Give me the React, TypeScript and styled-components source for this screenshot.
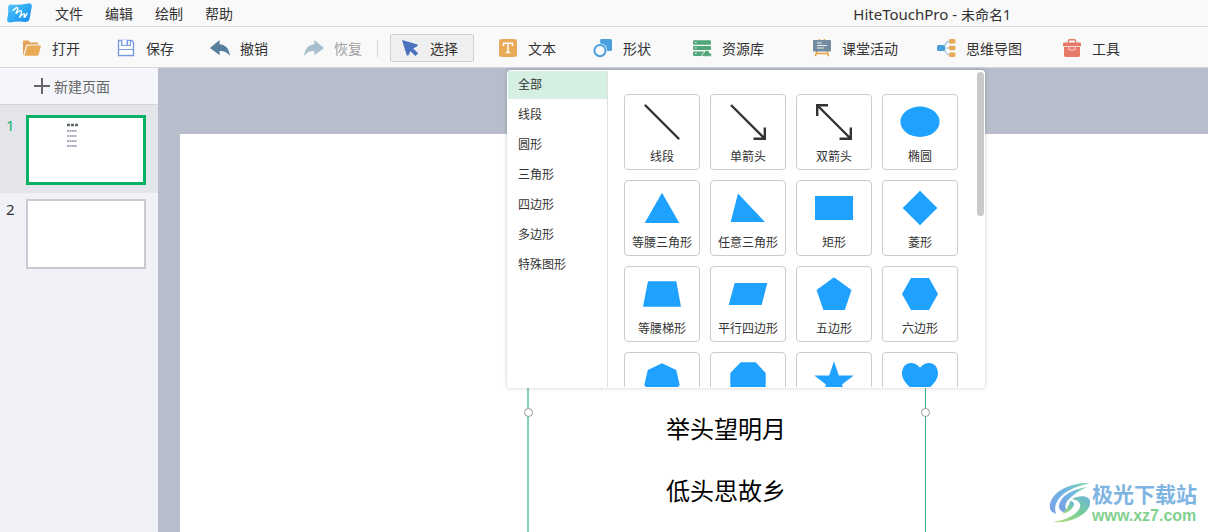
import React from "react";
import styled, { createGlobalStyle, css } from "styled-components";

const GlobalStyle = createGlobalStyle`
  *, *::before, *::after { box-sizing: border-box; }
  body { margin: 0; }
  body, button {
    font-family: "Noto Sans", "Noto Sans CJK SC", sans-serif;
    font-size: 14px;
    color: #333;
  }
  button { margin: 0; padding: 0; border: 0; background: none; cursor: pointer; }
  svg { display: block; flex: none; }
`;

const Shell = styled.div`
  position: relative;
  display: flex;
  flex-direction: column;
  min-height: 100vh;
  overflow: hidden;
`;

const TitleBar = styled.header`
  display: flex;
  align-items: center;
  height: 27px;
  padding-left: 7px;
  background: #f9f9f9;
  border-bottom: 1px solid #d9d9dc;
`;

const Menu = styled.nav`
  display: flex;
  gap: 22px;
  margin-left: 22px;
`;

const MenuButton = styled.button`
  padding-top: 2px;
  line-height: 24px;
`;

const WindowTitle = styled.h1`
  margin: 0 197px 0 auto;
  padding-top: 2px;
  font-size: 14px;
  font-weight: 400;
  line-height: 24px;
  white-space: nowrap;
`;

const AppName = styled.span`
  font-size: 15px;
`;

const Toolbar = styled.div`
  display: flex;
  align-items: center;
  height: 41px;
  padding: 2px 0 0 12px;
  background: #f9f9f9;
  border-bottom: 1px solid #d4d5da;
`;

const ToolGroup = styled.div`
  display: flex;
  gap: 10px;
`;

const ToolButton = styled.button<{ $active?: boolean; $lead?: number }>`
  display: flex;
  align-items: center;
  gap: 10px;
  height: 28px;
  margin-left: ${(p) => p.$lead ?? 0}px;
  padding: 0 15px 0 9px;
  border: 1px solid transparent;
  border-radius: 2px;
  line-height: 20px;
  white-space: nowrap;
  ${(p) =>
    p.$active &&
    css`
      background: #efefef;
      border-color: #d2d2d2;
    `}
  &:disabled { color: #a2a2a2; cursor: default; }
`;

const ToolLabel = styled.span`
  padding-top: 2px;
`;

const ToolDivider = styled.span`
  width: 1px;
  height: 17px;
  margin: 0 12px 0 -1px;
  background: #d6d6d6;
`;

const Body = styled.div`
  display: flex;
  flex: 1;
`;

const Sidebar = styled.aside`
  flex: none;
  width: 158px;
  background: #f1f2f8;
`;

const NewPage = styled.button`
  display: flex;
  align-items: center;
  gap: 4px;
  width: 100%;
  height: 37px;
  padding-left: 34px;
  background: #f5f6fc;
  border-bottom: 1px solid #d3d4db;
  color: #666;
`;

const PageList = styled.ol`
  margin: 0;
  padding: 0;
  list-style: none;
`;

const PageItem = styled.li<{ $selected?: boolean }>`
  display: flex;
  padding: 6px 12px 8px 6px;
  font-size: 15px;
  line-height: 20px;
  ${(p) =>
    p.$selected &&
    css`
      background: #e4e5ea;
      color: #12b36c;
    `}
  &:first-child { padding-top: 10px; }
`;

const PageNumber = styled.span`
  width: 20px;
`;

const Thumb = styled.button<{ $selected?: boolean }>`
  width: 120px;
  height: 70px;
  background: #fff;
  border: ${(p) => (p.$selected ? "3px solid #07b265" : "2px solid #c9cacd")};
`;

const Workspace = styled.main`
  position: relative;
  display: flex;
  flex: 1;
  padding: 66px 0 0 22px;
  background: #b7bdcb;
`;

const Sheet = styled.section`
  flex: 1;
  padding: 254px 0 0 347px;
  background: #fff;
`;

const TextBox = styled.div`
  position: relative;
  width: 399px;
  height: 100%;
  min-height: 144px;
  padding-top: 10px;
  border-left: 2px solid #83d3b2;
  border-right: 1px solid #3cae80;
`;

const Verse = styled.p`
  margin: 0;
  padding-right: 2px;
  color: #000;
  font-size: 24px;
  line-height: 62px;
  text-align: center;
`;

const Handle = styled.span<{ $side: "left" | "right" }>`
  position: absolute;
  top: 20px;
  ${(p) => p.$side}: -5px;
  width: 9px;
  height: 9px;
  border: 1px solid #999;
  border-radius: 50%;
  background: #fff;
`;

const ShapePanel = styled.div`
  position: absolute;
  top: 2px;
  left: 349px;
  display: flex;
  width: 478px;
  height: 318px;
  padding: 1px;
  overflow: hidden;
  background: #fff;
  border-radius: 4px;
  box-shadow: 0 0 4px rgba(0, 0, 0, 0.2);
`;

const Categories = styled.div`
  display: flex;
  flex: none;
  flex-direction: column;
  gap: 2px;
  width: 100px;
  border-right: 1px solid #e0e0e0;
`;

const Category = styled.button<{ $active?: boolean }>`
  height: 28px;
  padding: 0 0 0 10px;
  background: ${(p) => (p.$active ? "#d5efe3" : "transparent")};
  font-size: 12px;
  line-height: 28px;
  text-align: left;
`;

const ShapeScroll = styled.div`
  flex: 1;
  overflow: hidden;
  padding: 23px 0 0 16px;
`;

const ShapeGrid = styled.div`
  display: grid;
  grid-template-columns: repeat(4, 76px);
  grid-auto-rows: 76px;
  gap: 10px;
`;

const ShapeCard = styled.button`
  display: flex;
  flex-direction: column;
  align-items: center;
  gap: 5px;
  padding-top: 5px;
  border: 1px solid #ccc;
  border-radius: 4px;
  font-size: 12px;
  line-height: 16px;
  white-space: nowrap;
`;

const ScrollThumb = styled.span`
  position: absolute;
  top: 2px;
  right: 1px;
  width: 7px;
  height: 144px;
  border-radius: 4px;
  background: #c9c9c9;
`;

const Watermark = styled.div`
  position: absolute;
  right: 11px;
  bottom: 7px;
  display: flex;
  align-items: center;
  gap: 1px;
`;

const WatermarkText = styled.div`
  display: flex;
  flex-direction: column;
`;

const WatermarkName = styled.strong`
  color: #7eb4e2;
  font-size: 21px;
  line-height: 26px;
`;

const WatermarkSite = styled.strong`
  color: #7fd08f;
  font-family: "Liberation Sans", sans-serif;
  font-size: 16px;
  line-height: 18px;
`;

const Icon = ({ children }: { children: React.ReactNode }) => (
  <svg width="20" height="20" viewBox="0 0 20 20" fill="none" aria-hidden="true">
    {children}
  </svg>
);

const icons = {
  open: (
    <Icon>
      <path d="M1 17V3.6Q1 2.5 2 2.5H6.6L8.2 4.6H15.2Q16.2 4.6 16.2 5.6V6.4H5.4Q4.4 6.4 4 7.4L1.4 17Z" fill="#e0a254" />
      <path d="M2.3 17.8L5 8.6Q5.3 7.6 6.3 7.6H18Q19 7.6 18.8 8.6L16.6 16.8Q16.3 17.8 15.3 17.8Z" fill="#e9aa57" />
    </Icon>
  ),
  save: (
    <Icon>
      <path d="M2.5 2.5H15.6L17.5 4.4V17.5H2.5Z" stroke="#7b9be3" strokeWidth="1.4" fill="#fff" />
      <path d="M5 2H15V8H5Z" fill="#7b9be3" />
      <path d="M6.3 2H10.6V7H6.3ZM12 3H14V7H12Z" fill="#f4f7ff" />
      <path d="M2.5 11.5H17.5" stroke="#7b9be3" strokeWidth="1" />
    </Icon>
  ),
  undo: (
    <Icon>
      <path d="M0 10L9.6 2V6.2C15.5 6.6 19.2 10.8 20 18C17.2 14.3 14 13 9.6 13V17.2Z" fill="#557f9d" />
    </Icon>
  ),
  redo: (
    <Icon>
      <path d="M20 10L10.4 2V6.2C4.5 6.6 .8 10.8 0 18C2.8 14.3 6 13 10.4 13V17.2Z" fill="#a9becd" />
    </Icon>
  ),
  select: (
    <Icon>
      <path d="M2 2L17.6 6.6V8L13.2 10.4L18.2 15.2L15.4 18L10.4 13.2L8.4 17.4H6.8Z" fill="#4a72bd" />
    </Icon>
  ),
  text: (
    <Icon>
      <rect x="1" y="1" width="18" height="18" rx="3" fill="#e9aa57" />
      <path d="M5.5 8V5.2H14.5V8M10 5.2V14.6M7.6 14.6H12.4" stroke="#fff" strokeWidth="1.5" />
    </Icon>
  ),
  shape: (
    <Icon>
      <path d="M8.4 1H17.4Q19 1 19 2.6V11.4Q19 13 17.4 13H7.2V2.2Q7.2 1 8.4 1Z" fill="#4a9fdd" />
      <circle cx="7" cy="12.6" r="7.2" fill="#f9f9f9" />
      <circle cx="7" cy="12.6" r="5.6" stroke="#4a9fdd" strokeWidth="2" />
    </Icon>
  ),
  resource: (
    <Icon>
      <rect x="1" y="2.2" width="18" height="4.6" rx="1" fill="#4fa777" />
      <rect x="1" y="8" width="18" height="4" rx="1" fill="#4fa777" />
      <rect x="1" y="13.4" width="11" height="4.6" rx="1" fill="#4fa777" />
      <path d="M3 4.5H4.6M3 10H4.6M3 15.6H4.6" stroke="#e6f4ec" strokeWidth="1" />
      <path d="M11.6 18.4Q9.8 18.2 10 16.6Q10.2 15.2 11.8 15.2Q12.4 12.2 15 12.2Q17.4 12.4 17.6 15Q19.8 15.2 19.8 16.8Q19.6 18.4 18 18.4Z" fill="#4fa777" stroke="#f9f9f9" strokeWidth=".7" />
    </Icon>
  ),
  lesson: (
    <Icon>
      <path d="M7.5 1V2.6M12.5 1V2.6" stroke="#e9aa57" strokeWidth="1.6" />
      <path d="M5 12.6L3.4 18.2M15 12.6L16.6 18.2M4 15.5H16" stroke="#e9a03f" strokeWidth="1.5" />
      <rect x="1" y="2" width="18" height="11.4" rx="1" fill="#738b9f" />
      <path d="M5 5H10M5 7.5H15M5 10H12" stroke="#e9eef2" strokeWidth="1" />
    </Icon>
  ),
  mind: (
    <Icon>
      <path d="M8 10H14M8 10Q9.4 3.4 14 3.2M8 10Q9.4 16.6 14 16.8" stroke="#8fbfe3" strokeWidth="1.2" />
      <rect x="1" y="7" width="8" height="6" rx="1.6" fill="#4a9fdd" />
      <rect x="13" y="1" width="6.4" height="4.6" rx="1.2" fill="#e9aa57" />
      <rect x="13" y="7.7" width="6.4" height="4.6" rx="1.2" fill="#e9aa57" />
      <rect x="13" y="14.4" width="6.4" height="4.6" rx="1.2" fill="#e9aa57" />
    </Icon>
  ),
  tools: (
    <Icon>
      <path d="M6.4 5V3Q6.4 1.7 7.6 1.7H12.4Q13.6 1.7 13.6 3V5" stroke="#e77968" strokeWidth="1.4" />
      <path d="M1 5.4Q1 4.4 2 4.4H18Q19 4.4 19 5.4V8.2H1Z" fill="#e77968" />
      <path d="M2 9H18V17.6Q18 19 16.6 19H3.4Q2 19 2 17.6Z" fill="#e77968" />
      <path d="M7 9V12H13V9" stroke="#fbd4cd" strokeWidth="1" />
    </Icon>
  ),
};

const editTools = [
  { key: "open", label: "打开" },
  { key: "save", label: "保存" },
  { key: "undo", label: "撤销" },
  { key: "redo", label: "恢复", disabled: true },
] as const;

const insertTools = [
  { key: "select", label: "选择", lead: 0 },
  { key: "text", label: "文本", lead: 14 },
  { key: "shape", label: "形状", lead: 11 },
  { key: "resource", label: "资源库", lead: 15 },
  { key: "lesson", label: "课堂活动", lead: 22 },
  { key: "mind", label: "思维导图", lead: 12 },
  { key: "tools", label: "工具", lead: 14 },
] as const;

const menus = ["文件", "编辑", "绘制", "帮助"];
const categories = ["全部", "线段", "圆形", "三角形", "四边形", "多边形", "特殊图形"];

const line = { stroke: "#333", strokeWidth: 2.4, fill: "none" };

const shapes: { name: string; art: React.ReactNode; peeking?: boolean }[] = [
  { name: "线段", art: <path d="M5.5 5.5L38.5 38.5" strokeLinecap="round" {...line} /> },
  { name: "单箭头", art: <path d="M5 5L38.5 38.5M27.5 38.8H38.8V27.5" {...line} /> },
  { name: "双箭头", art: <path d="M5.5 5.5L38.5 38.5M27.5 38.8H38.8V27.5M16 5.2H5.2V16" {...line} /> },
  { name: "椭圆", art: <ellipse cx="22" cy="21.8" rx="19.6" ry="15.2" /> },
  { name: "等腰三角形", art: <path d="M22 6.7L39.3 37H4.7Z" /> },
  { name: "任意三角形", art: <path d="M12 7.5L39 36H4.7Z" /> },
  { name: "矩形", art: <path d="M3 10H41V34H3Z" /> },
  { name: "菱形", art: <path d="M22 4.7L39.3 22L22 39.3L4.7 22Z" /> },
  { name: "等腰梯形", art: <path d="M8 9.3H36.3L41 34.7H3Z" /> },
  { name: "平行四边形", art: <path d="M8.7 11H41.3L35.7 33H2.7Z" /> },
  { name: "五边形", art: <path d="M22 5.3L39.5 18L32.8 38H11.4L4.5 18Z" /> },
  { name: "六边形", art: <path d="M13 6H31L40 22L31 38H13L4 22Z" /> },
  { name: "七边形", peeking: true, art: <path d="M22 5.3L36.2 12L39.7 27L30 39H14L4.3 27L7.8 12Z" /> },
  { name: "八边形", peeking: true, art: <path d="M14.7 4.2H29.7L39.7 15V29L29.7 39.6H14.7L4.3 29V15Z" /> },
  { name: "五角星", peeking: true, art: <path d="M22 3.3L26.8 17.4H41.7L30 26.4L34.2 40L22 31.8L9.8 40L14 26.4L2.3 17.4H17.2Z" /> },
  { name: "心形", peeking: true, art: <path d="M22 9.7C25 6.4 28 5 31 5C36.5 5 40 9.6 40 15.6C40 24 31 30 22 38.6C13 30 4 24 4 15.6C4 9.6 7.5 5 13 5C16 5 19 6.4 22 9.7Z" /> },
];

const AppLogo = () => (
  <svg width="26" height="20" viewBox="0 0 26 20" aria-hidden="true">
    <defs>
      <linearGradient id="logoFill" x1="0" y1="0" x2="1" y2="1">
        <stop offset="0" stopColor="#58c4fa" />
        <stop offset=".5" stopColor="#2faaf5" />
        <stop offset="1" stopColor="#1686e8" />
      </linearGradient>
    </defs>
    <path d="M4 1.4Q12 2.2 21 .4Q25 0 24.8 3.6Q23.6 10 22.6 15.6Q22 18.8 19 19Q10 18 3 19.4Q-.4 19.4 .2 16Q1.6 10 1.2 4.4Q1.2 1.2 4 1.4Z" fill="url(#logoFill)" />
    <path d="M6 7.6Q9.8 3.6 10.8 5Q11 6.6 9 10.4Q13 6.6 14.4 8Q15 9.4 12.6 14.4Q16 10.4 17.4 11Q17.8 11.8 17 14.2Q18.6 14 20 10.4" fill="none" stroke="#fff" strokeWidth="1.4" strokeLinecap="round" strokeLinejoin="round" />
  </svg>
);

/* Miniature of the poem: a heading and four short lines */
const PoemPreview = () => (
  <svg width="114" height="64" viewBox="0 0 114 64" aria-hidden="true">
    <path d="M38 7H49" stroke="#5c6b62" strokeWidth="2.4" strokeDasharray="3 1" />
    <path d="M38 13H48M38 18H48M38 23H48M38 28H48" stroke="#8d92a8" strokeWidth="1.6" strokeDasharray="2 .4" />
  </svg>
);

const Swirl = () => (
  <svg width="42" height="42" viewBox="0 0 42 42" aria-hidden="true">
    <defs>
      <linearGradient id="swirlBlue" x1="1" y1="0" x2="0" y2="1">
        <stop offset="0" stopColor="#8bd8a4" />
        <stop offset=".4" stopColor="#6fb8e2" />
        <stop offset="1" stopColor="#7b9ee6" />
      </linearGradient>
      <linearGradient id="swirlGreen" x1="1" y1="0" x2="0" y2="1">
        <stop offset="0" stopColor="#6fb4e0" />
        <stop offset=".45" stopColor="#76cc98" />
        <stop offset="1" stopColor="#b9dd7c" />
      </linearGradient>
    </defs>
    <path d="M41 1C24 0 4 8 1 22C0 27 2 30 7 32C4 23 9 15 19 9C26 5 34 3 41 1Z" fill="url(#swirlBlue)" />
    <path d="M38 5C24 7 11 14 10 24C10 29 14 31 19 30C15 26 16 21 20 17C25 12 31 8 38 5Z" fill="url(#swirlBlue)" />
    <path d="M23 17C30 13 40 13 41 19C43 30 24 42 4 40C18 38 29 32 31 25C32 21 29 18 23 17Z" fill="url(#swirlGreen)" />
    <path d="M21 19C25 19 26 22 24 25C22 28 18 31 13 32C17 28 20 24 21 19Z" fill="url(#swirlGreen)" />
  </svg>
);

export default function App() {
  return (
    <Shell>
      <GlobalStyle />
      <TitleBar>
        <AppLogo />
        <Menu>
          {menus.map((m) => (
            <MenuButton key={m}>{m}</MenuButton>
          ))}
        </Menu>
        <WindowTitle>
          <AppName>HiteTouchPro - </AppName>
          未命名1
        </WindowTitle>
      </TitleBar>
      <Toolbar>
        <ToolGroup>
          {editTools.map((t) => (
            <ToolButton key={t.key} disabled={"disabled" in t}>
              {icons[t.key]}
              <ToolLabel>{t.label}</ToolLabel>
            </ToolButton>
          ))}
        </ToolGroup>
        <ToolDivider />
        {insertTools.map((t) => (
          <ToolButton key={t.key} $active={t.key === "select"} $lead={t.lead}>
            {icons[t.key]}
            <ToolLabel>{t.label}</ToolLabel>
          </ToolButton>
        ))}
      </Toolbar>
      <Body>
        <Sidebar>
          <NewPage>
            <svg width="16" height="16" viewBox="0 0 16 16" aria-hidden="true">
              <path d="M8 0V16M0 8H16" stroke="#666" strokeWidth="2" />
            </svg>
            新建页面
          </NewPage>
          <PageList>
            <PageItem $selected>
              <PageNumber>1</PageNumber>
              <Thumb $selected aria-label="1">
                <PoemPreview />
              </Thumb>
            </PageItem>
            <PageItem>
              <PageNumber>2</PageNumber>
              <Thumb aria-label="2" />
            </PageItem>
          </PageList>
        </Sidebar>
        <Workspace>
          <Sheet>
            <TextBox>
              <Verse>举头望明月</Verse>
              <Verse>低头思故乡</Verse>
              <Handle $side="left" />
              <Handle $side="right" />
            </TextBox>
          </Sheet>
          <ShapePanel>
            <Categories>
              {categories.map((c, i) => (
                <Category key={c} $active={i === 0}>
                  {c}
                </Category>
              ))}
            </Categories>
            <ShapeScroll>
              <ShapeGrid>
                {shapes.map((s) => (
                  <ShapeCard key={s.name} aria-label={s.name}>
                    <svg width="44" height="44" viewBox="0 0 44 44" fill="#1ea1ff" aria-hidden="true">
                      {s.art}
                    </svg>
                    {!s.peeking && s.name}
                  </ShapeCard>
                ))}
              </ShapeGrid>
            </ShapeScroll>
            <ScrollThumb />
          </ShapePanel>
        </Workspace>
      </Body>
      <Watermark>
        <Swirl />
        <WatermarkText>
          <WatermarkName>极光下载站</WatermarkName>
          <WatermarkSite>www.xz7.com</WatermarkSite>
        </WatermarkText>
      </Watermark>
    </Shell>
  );
}
